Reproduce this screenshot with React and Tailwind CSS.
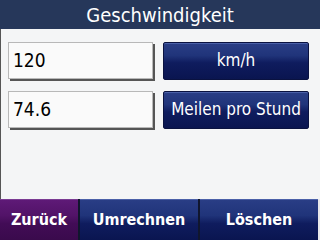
import React from "react";

const font = { fontFamily: '"DejaVu Sans Condensed", "DejaVu Sans", sans-serif' };

const UnitButton = ({ label }) => (
  <div className="h-[38px] w-[146px] flex items-center justify-center text-white text-[17px] rounded-[2px] border border-[#0a1240] bg-[linear-gradient(to_bottom,#2a3e86_0%,#20347a_35%,#0f1c5e_55%,#0a1550_100%)] shadow-[inset_0_1px_0_#4a60a8]">
    {label}
  </div>
);

const Field = ({ value }) => (
  <div className="h-[37px] w-[145px] flex items-center pl-[4px] text-black text-[19px] bg-[#fafafa] border border-[#b8b8b8] shadow-[2px_2px_0_#555]">
    {value}
  </div>
);

const App = () => {
  return (
    <div className="w-[320px] h-[240px] flex flex-col bg-[#f4f5f6] overflow-hidden" style={font}>
      {/* title bar */}
      <div className="h-[29px] bg-[#26375a] text-white text-[20px] flex items-center justify-center">
        Geschwindigkeit
      </div>

      {/* fields and units */}
      <div className="flex-1 border-l border-[#555] pl-[7px] pt-[13px] flex flex-col gap-[11px]">
        <div className="flex gap-[10px]">
          <Field value="120" />
          <UnitButton label="km/h" />
        </div>
        <div className="flex gap-[10px]">
          <Field value="74.6" />
          <UnitButton label="Meilen pro Stund" />
        </div>
      </div>

      {/* bottom bar */}
      <div className="h-[41px] flex bg-[#e8e8ea] text-white font-bold text-[16px]">
        <div className="flex-1 flex gap-[2px] bg-[#10162e]">
          <div className="w-[78px] flex items-center justify-center bg-[linear-gradient(to_bottom,#5f1a78_0%,#521368_40%,#420c56_60%,#3a0a4c_100%)] shadow-[inset_0_1px_0_#7a3a92]">
            Zurück
          </div>
          <div className="w-[118px] flex items-center justify-center bg-[linear-gradient(to_bottom,#2a3e86_0%,#20347a_40%,#0f1c5e_60%,#0a1550_100%)] shadow-[inset_0_1px_0_#4a60a8]">
            Umrechnen
          </div>
          <div className="flex-1 flex items-center justify-center bg-[linear-gradient(to_bottom,#2a3e86_0%,#20347a_40%,#0f1c5e_60%,#0a1550_100%)] shadow-[inset_0_1px_0_#4a60a8]">
            Löschen
          </div>
        </div>
        <div className="w-[2px]" />
      </div>
    </div>
  );
};

export default App;
